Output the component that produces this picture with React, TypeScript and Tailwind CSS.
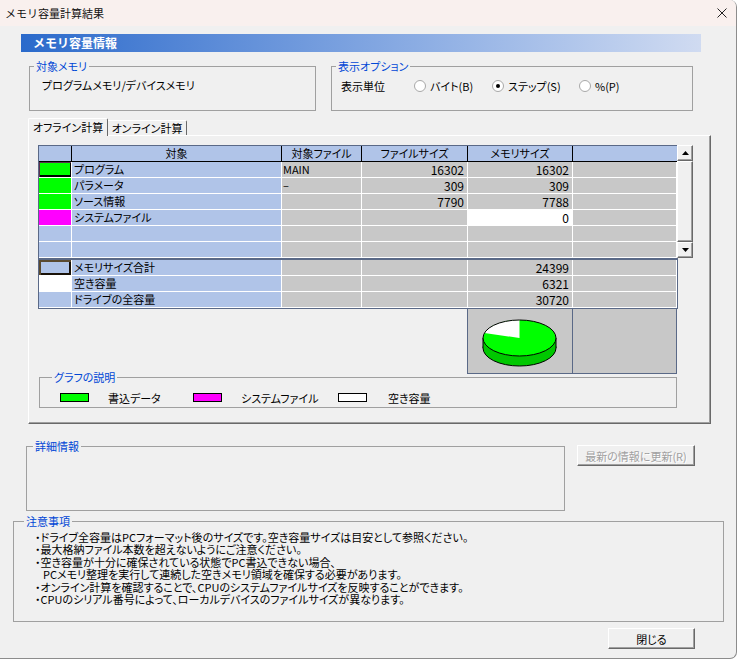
import React from "react";

const W = ["w-[33px]", "w-[210px]", "w-[80px]", "w-[106px]", "w-[105px]", "w-[104px]"];

function Radio({ checked }: { checked?: boolean }) {
  return (
    <span className="w-[12px] h-[12px] rounded-full border border-[#a8a8a8] bg-white flex items-center justify-center shrink-0">
      {checked && <span className="w-[4px] h-[4px] rounded-full bg-black" />}
    </span>
  );
}

function Lg({ children, ml }: { children: React.ReactNode; ml?: string }) {
  return <legend className={`${ml ?? "ml-[4px]"} px-[2px] text-[#0047d6] leading-[14px]`}>{children}</legend>;
}

function C({ w, cls, children }: { w: string; cls: string; children?: React.ReactNode }) {
  return (
    <div className={`${w} ${cls} h-[16px] shrink-0 border-r border-b border-white leading-[15px] overflow-hidden whitespace-nowrap`}>
      {children}
    </div>
  );
}

const LB = "bg-[#b0c4e8]";
const GR = "bg-[#c8c8c8]";

type R = { sw: string; name: string; file?: string; fs?: string; ms?: string; mWhite?: boolean };

const rows: R[] = [
  { sw: "bg-[#00ff00] shadow-[inset_1px_1px_0_#5a3050,inset_-1px_-2px_0_#000]", name: "プログラム", file: "MAIN", fs: "16302", ms: "16302" },
  { sw: "bg-[#00ff00]", name: "パラメータ", file: "–", fs: "309", ms: "309" },
  { sw: "bg-[#00ff00]", name: "ソース情報", fs: "7790", ms: "7788" },
  { sw: "bg-[#ff00ff]", name: "システムファイル", ms: "0", mWhite: true },
  { sw: LB, name: "" },
  { sw: LB, name: "" },
];

const sums: R[] = [
  { sw: "bg-[#b0c4e8] shadow-[inset_2px_2px_0_#5a4a30,inset_-2px_-2px_0_#1a1208]", name: "メモリサイズ合計", ms: "24399" },
  { sw: "bg-white", name: "空き容量", ms: "6321" },
  { sw: LB, name: "ドライブの全容量", ms: "30720" },
];

function DataRow({ r }: { r: R }) {
  return (
    <div className="flex">
      <C w={W[0]} cls={r.sw} />
      <C w={W[1]} cls={`${LB} pl-[2px]`}>{r.name}</C>
      <C w={W[2]} cls={`${GR} pl-[1px]`}>{r.file}</C>
      <C w={W[3]} cls={`${GR} text-right pr-[3px] text-[12px]`}>{r.fs}</C>
      <C w={W[4]} cls={`${r.mWhite ? "bg-white" : GR} text-right pr-[3px] text-[12px]`}>{r.ms}</C>
      <C w={W[5]} cls={GR} />
    </div>
  );
}

function Arrow({ up }: { up?: boolean }) {
  return (
    <div className="h-[16px] w-[16px] bg-[#f0f0f0] border border-t-white border-l-white border-r-[#696969] border-b-[#696969] shadow-[inset_-1px_-1px_0_#a0a0a0] flex items-center justify-center">
      <svg width="7" height="4" viewBox="0 0 7 4">
        {up ? <path d="M0 4 L3.5 0 L7 4 Z" fill="#000" /> : <path d="M0 0 L3.5 4 L7 0 Z" fill="#000" />}
      </svg>
    </div>
  );
}

function Pie() {
  const cx = 51.5, cy = 29, rx = 36.5, ry = 18, d = 10;
  return (
    <svg width="105" height="64" viewBox="0 0 105 64">
      <ellipse cx={cx} cy={cy + d} rx={rx} ry={ry} fill="#00c800" stroke="#000" strokeWidth="1" />
      <rect x={cx - rx} y={cy} width={rx * 2} height={d} fill="#00c800" />
      <line x1={cx - rx} y1={cy} x2={cx - rx} y2={cy + d} stroke="#000" strokeWidth="1" />
      <line x1={cx + rx} y1={cy} x2={cx + rx} y2={cy + d} stroke="#000" strokeWidth="1" />
      <ellipse cx={cx} cy={cy} rx={rx} ry={ry} fill="#00ff00" />
      <path d={`M${cx} ${cy} L${cx} ${cy - ry} A${rx} ${ry} 0 0 0 16.4 24 Z`} fill="#fff" />
      <ellipse cx={cx} cy={cy} rx={rx} ry={ry} fill="none" stroke="#000" strokeWidth="1" />
    </svg>
  );
}

const raised =
  "bg-[#f0f0f0] border border-t-white border-l-white border-r-[#696969] border-b-[#696969] shadow-[inset_-1px_-1px_0_#a0a0a0]";

export default function App() {
  return (
    <div className="w-[739px] h-[660px] bg-white font-['Noto_Sans_CJK_JP',sans-serif] [font-feature-settings:'palt'] text-[11px] text-black">
      <div className="w-[737px] h-[659px] bg-[#f0f0f0] border-r border-b border-[#8c8c8c] rounded-br-[7px] rounded-tr-[7px] overflow-hidden flex flex-col">
        {/* title bar */}
        <div className="h-[26px] shrink-0 bg-[#f9f0ee] flex items-center justify-between pl-[5px] pr-[9px]">
          <span className="text-[11px] [font-feature-settings:normal] text-[#111]">メモリ容量計算結果</span>
          <svg width="10" height="10" viewBox="0 0 10 10">
            <path d="M0.5 0.5 L9.5 9.5 M9.5 0.5 L0.5 9.5" stroke="#222" strokeWidth="1" />
          </svg>
        </div>

        {/* header */}
        <div className="ml-[21px] mt-[8px] w-[680px] h-[18px] bg-gradient-to-r from-[#2a6acb] to-[#d0dbf1] flex items-center pl-[12px]">
          <span className="text-white font-bold text-[12px] [font-feature-settings:normal] leading-[14px]">メモリ容量情報</span>
        </div>

        {/* groups */}
        <div className="flex mt-[7px]">
          <fieldset className="ml-[29px] w-[287px] h-[52px] border border-[#a0a0a0]">
            <Lg>対象メモリ</Lg>
            <div className="pl-[12px] pt-[5px] leading-[14px]">プログラムメモリ/デバイスメモリ</div>
          </fieldset>
          <fieldset className="ml-[15px] w-[362px] h-[52px] border border-[#a0a0a0]">
            <Lg>表示オプション</Lg>
            <div className="pl-[9px] pt-[6px] flex items-center leading-[14px]">
              <span className="w-[73px]">表示単位</span>
              <Radio />
              <span className="ml-[4px] w-[62px]">バイト(B)</span>
              <Radio checked />
              <span className="ml-[4px] w-[71px]">ステップ(S)</span>
              <Radio />
              <span className="ml-[4px]">%(P)</span>
            </div>
          </fieldset>
        </div>

        {/* tabs */}
        <div className="flex items-end ml-[28px] mt-[7px] h-[17px]">
          <div className="relative z-10 -mb-[1px] h-[18px] w-[80px] bg-[#f0f0f0] border-l border-t border-l-white border-t-white border-r border-r-[#696969] rounded-t-[2px] flex items-center justify-center leading-[14px] pb-[1px]">
            オフライン計算
          </div>
          <div className="h-[15px] w-[79px] bg-[#f0f0f0] border-t border-t-white border-r border-r-[#696969] rounded-tr-[2px] flex items-center justify-center leading-[14px]">
            オンライン計算
          </div>
        </div>

        {/* tab panel */}
        <div className="ml-[28px] w-[683px] h-[289px] border border-t-white border-l-white border-r-[#696969] border-b-[#696969] shadow-[inset_-1px_-1px_0_#a0a0a0] pl-[9px] pt-[9px]">
          <div className="flex">
            <div className="w-[639px] border-l border-t border-[#5a6987]">
              <div className="flex">
                <div className={`${W[0]} h-[16px] ${LB} border-r border-b border-black`} />
                <div className={`${W[1]} h-[16px] ${LB} border-r border-b border-black text-center leading-[15px]`}>対象</div>
                <div className={`${W[2]} h-[16px] ${LB} border-r border-b border-black text-center leading-[15px]`}>対象ファイル</div>
                <div className={`${W[3]} h-[16px] ${LB} border-r border-b border-black text-center leading-[15px]`}>ファイルサイズ</div>
                <div className={`${W[4]} h-[16px] ${LB} border-r border-b border-black text-center leading-[15px]`}>メモリサイズ</div>
                <div className={`${W[5]} h-[16px] ${LB} border-b border-black`} />
              </div>
              {rows.map((r, i) => (
                <DataRow key={i} r={r} />
              ))}
            </div>
            <div className="w-[16px] h-[113px] flex flex-col">
              <Arrow up />
              <div className={`flex-1 ${raised}`} />
              <Arrow />
            </div>
          </div>
          <div className="w-[640px] border-l border-r border-t-2 border-b border-[#5a6987]">
            {sums.map((r, i) => (
              <DataRow key={i} r={r} />
            ))}
          </div>
          <div className="flex ml-[429px]">
            <div className={`w-[106px] h-[65px] ${GR} border-l border-r border-b border-[#5a6987]`}>
              <Pie />
            </div>
            <div className={`w-[104px] h-[65px] ${GR} border-r border-b border-[#5a6987]`} />
          </div>
          <fieldset className="-mt-[4px] ml-[1px] w-[638px] h-[38px] border border-[#a0a0a0]">
            <Lg ml="ml-[12px]">グラフの説明</Lg>
            <div className="flex items-center h-[9px] mt-[9px] pl-[20px] leading-[14px]">
              <span className="w-[29px] h-[9px] bg-[#00ff00] border border-black shrink-0" />
              <span className="ml-[19px] w-[85px]">書込データ</span>
              <span className="w-[29px] h-[9px] bg-[#ff00ff] border border-black shrink-0" />
              <span className="ml-[19px] w-[97px]">システムファイル</span>
              <span className="w-[29px] h-[9px] bg-white border border-black shrink-0" />
              <span className="ml-[21px]">空き容量</span>
            </div>
          </fieldset>
        </div>

        {/* detail */}
        <div className="flex mt-[15px]">
          <fieldset className="ml-[26px] w-[539px] h-[72px] border border-[#a0a0a0]">
            <Lg ml="ml-[6px]">詳細情報</Lg>
          </fieldset>
          <div className={`ml-[12px] mt-[6px] w-[118px] h-[21px] ${raised} flex items-center justify-center text-[#a0a0a0] [text-shadow:1px_1px_0_#fff] leading-[14px]`}>
            最新の情報に更新(R)
          </div>
        </div>

        {/* notes */}
        <fieldset className="ml-[13px] mt-[3px] w-[711px] h-[108px] border border-[#a0a0a0]">
          <Lg ml="ml-[10px]">注意事項</Lg>
          <div className="pl-[21px] pt-[3px] leading-[12.4px]">
            <div>・ドライブ全容量はPCフォーマット後のサイズです。空き容量サイズは目安として参照ください。</div>
            <div>・最大格納ファイル本数を超えないようにご注意ください。</div>
            <div>・空き容量が十分に確保されている状態でPC書込できない場合、</div>
            <div className="pl-[8px]">PCメモリ整理を実行して連続した空きメモリ領域を確保する必要があります。</div>
            <div>・オンライン計算を確認することで、CPUのシステムファイルサイズを反映することができます。</div>
            <div>・CPUのシリアル番号によって、ローカルデバイスのファイルサイズが異なります。</div>
          </div>
        </fieldset>

        {/* close */}
        <div className={`ml-[608px] mt-[6px] w-[87px] h-[21px] ${raised} flex items-center justify-center leading-[14px]`}>
          閉じる
        </div>
      </div>
    </div>
  );
}
